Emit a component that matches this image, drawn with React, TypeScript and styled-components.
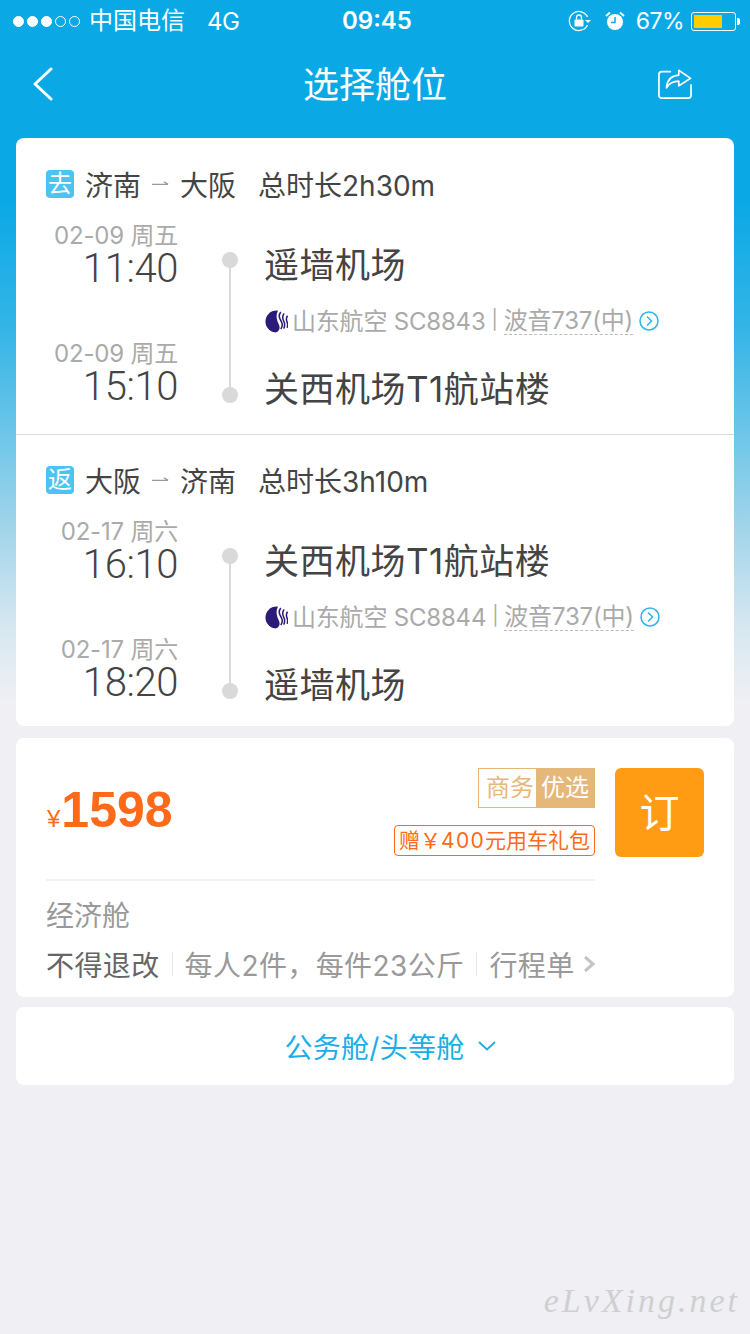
import React from 'react';
import styled, { createGlobalStyle } from 'styled-components';

const GlobalStyle = createGlobalStyle`
  html, body {
    margin: 0;
    padding: 0;
    background: #efeff4;
  }
  * {
    box-sizing: border-box;
  }
`;

const FONT = `Inter, "Noto Sans CJK SC", sans-serif`;

const Page = styled.div`
    width: 750px;
    height: 1334px;
    position: relative;
    overflow: hidden;
    font-family: ${FONT};
    color: #444;
    background: linear-gradient(
      to bottom,
      #0aa9e6 200px,
      #35b5e6 330px,
      #a5d6ea 535px,
      #d8e8f0 630px,
      #efeff4 700px
    );
  `,
  StatusBar = styled.div`
    height: 40px;
    display: flex;
    align-items: center;
    justify-content: space-between;
    padding: 2px 14px 0 13px;
    color: #fff;
    font-size: 24px;
    position: relative;
  `,
  StatusGroup = styled.div`
    display: flex;
    align-items: center;
  `,
  SignalDot = styled.span<{ $on?: boolean }>`
    width: 11px;
    height: 11px;
    margin-right: 3px;
    border-radius: 50%;
    border: 1px solid #fff;
    background: ${(props) => (props.$on ? '#fff' : 'transparent')};
  `,
  Carrier = styled.span`
    margin: -6px 0 0 6px;
  `,
  Network = styled.span`
    margin-left: 22px;
    letter-spacing: -0.5px;
  `,
  Clock = styled.span`
    position: absolute;
    left: 342px;
    top: 6px;
    font-weight: 600;
    font-size: 24px;
  `,
  AlarmIcon = styled.svg`
    margin-left: 13px;
  `,
  Percent = styled.span`
    margin: 0 7px 0 11px;
    font-size: 23px;
    letter-spacing: -0.5px;
  `,
  Battery = styled.div`
    width: 45px;
    height: 19px;
    border: 1px solid #fff;
    border-radius: 3px;
    padding: 2px;
    position: relative;
    &::after {
      content: '';
      position: absolute;
      right: -5px;
      top: 5px;
      width: 3px;
      height: 7px;
      background: #fff;
      border-radius: 0 2px 2px 0;
    }
  `,
  BatteryFill = styled.div<{ $level: number }>`
    width: ${(props) => props.$level}%;
    height: 100%;
    background: #ffcc00;
  `,
  NavBar = styled.div`
    height: 90px;
    display: grid;
    grid-template-columns: 1fr auto 1fr;
    align-items: center;
    padding: 0 58px;
    color: #fff;
    margin-bottom: 8px;
  `,
  NavTitle = styled.div`
    font-size: 36px;
    line-height: 50px;
  `,
  BackIcon = styled.svg`
    margin: -2px 0 0 -26px;
  `,
  ShareIcon = styled.svg`
    justify-self: end;
    margin-top: -2px;
  `,
  Card = styled.div<{ $gap?: number }>`
    margin: 0 16px ${(props) => props.$gap || 0}px;
    background: #fff;
    border-radius: 8px;
  `,
  Section = styled.div`
    padding: 32px 30px 25px;
    & + & {
      border-top: 1px solid #d9d9d9;
      padding-top: 31px;
      padding-bottom: 21px;
    }
  `,
  RouteHeader = styled.div`
    display: flex;
    align-items: center;
    height: 30px;
    padding-bottom: 3px;
    font-size: 28px;
    color: #444;
  `,
  DirectionTag = styled.span`
    width: 28px;
    height: 28px;
    border-radius: 4px;
    background: #4cc4f2;
    color: #fff;
    font-size: 24px;
    line-height: 28px;
    text-align: center;
    margin-right: 11px;
  `,
  RouteArrow = styled.svg`
    margin: 0 11px 0 11px;
  `,
  Duration = styled.span`
    margin-left: 22px;
  `,
  Body = styled.div`
    display: flex;
    margin-top: 24px;
    height: 185px;
  `,
  Times = styled.div`
    width: 132px;
    text-align: right;
  `,
  DateText = styled.div`
    font-size: 24px;
    line-height: 24px;
    letter-spacing: -0.2px;
    color: #aaa;
    white-space: nowrap;
  `,
  TimeText = styled.div`
    font-family: Roboto, ${FONT};
    font-weight: 300;
    font-size: 40px;
    line-height: 42px;
    letter-spacing: -0.4px;
    color: #444;
    margin-bottom: 52px;
  `,
  Timeline = styled.div`
    width: 16px;
    margin: 28px 27px 0 44px;
    height: 151px;
    display: flex;
    flex-direction: column;
    align-items: center;
  `,
  TimelineDot = styled.div`
    width: 16px;
    height: 16px;
    flex: none;
    border-radius: 50%;
    background: #d9d9d9;
  `,
  TimelineLine = styled.div`
    width: 2px;
    flex: 1;
    background: #d9d9d9;
  `,
  Stops = styled.div`
    padding-top: 21px;
    margin-left: -1px;
    flex: 1;
  `,
  StopName = styled.div`
    font-size: 35px;
    line-height: 40px;
    letter-spacing: 0.5px;
    color: #444;
  `,
  FlightInfo = styled.div`
    display: flex;
    align-items: center;
    height: 30px;
    margin: 21px 0 33px;
    padding-left: 1px;
    font-size: 24px;
    letter-spacing: -0.2px;
    color: #aaa;
    white-space: nowrap;
  `,
  LogoMark = styled.svg`
    margin-right: 4px;
    flex: none;
  `,
  FlightText = styled.span`
    margin-top: -4px;
  `,
  PlaneType = styled.span`
    border-bottom: 1px dashed #bbb;
    line-height: 27px;
    margin-top: -1px;
  `,
  Separator = styled.span`
    margin: -4px 6px 0;
    font-size: 19px;
  `,
  DetailIcon = styled.svg`
    margin-left: 6px;
    flex: none;
  `,
  FareCard = styled.div`
    display: flex;
    padding: 30px 30px 13px;
  `,
  FareMain = styled.div`
    width: 549px;
    flex: none;
  `,
  FareTop = styled.div`
    height: 113px;
    padding-bottom: 29px;
    display: flex;
    align-items: center;
    justify-content: space-between;
    border-bottom: 2px solid #f3f3f3;
  `,
  Price = styled.div`
    display: flex;
    align-items: baseline;
    font-family: 'Liberation Sans', sans-serif;
    color: #ff6a1a;
    font-weight: 700;
    font-size: 50px;
    margin-top: 2px;
  `,
  Yen = styled.span`
    font-size: 24px;
    font-weight: 400;
    margin: 0 1px 0 1px;
  `,
  Tags = styled.div`
    align-self: flex-start;
    display: flex;
    flex-direction: column;
    align-items: flex-end;
    gap: 17px;
  `,
  BrandTag = styled.div`
    display: flex;
    height: 40px;
    border: 1px solid #e5b87a;
    font-size: 24px;
    line-height: 38px;
  `,
  BrandPart = styled.span<{ $solid?: boolean }>`
    padding: 0 ${(props) => (props.$solid ? '5px' : '2px')} 0 ${(props) => (props.$solid ? '5px' : '7px')};
    background: ${(props) => (props.$solid ? '#e5b87a' : '#fff')};
    color: ${(props) => (props.$solid ? '#fff' : '#e5b87a')};
  `,
  GiftTag = styled.div`
    height: 31px;
    padding: 0 4px;
    border: 1px solid #ff6a1a;
    border-radius: 4px;
    font-size: 21px;
    line-height: 29px;
    color: #ff6a1a;
    white-space: nowrap;
  `,
  GiftAmount = styled.span`
    letter-spacing: 1.300px;
  `,
  CabinName = styled.div`
    font-size: 28px;
    line-height: 40px;
    margin-top: 15px;
    color: #999;
  `,
  Rules = styled.div`
    display: flex;
    align-items: center;
    height: 40px;
    margin-top: 8px;
    font-size: 28px;
    letter-spacing: 0.4px;
    color: #999;
    white-space: nowrap;
  `,
  RuleStrong = styled.span`
    color: #666;
  `,
  RuleDivider = styled.span`
    width: 1px;
    height: 24px;
    margin: 0 12px;
    background: #e8e8e8;
  `,
  RuleChevron = styled.svg`
    margin-left: 8px;
  `,
  BookButton = styled.div`
    width: 89px;
    height: 89px;
    margin-left: 20px;
    flex: none;
    border-radius: 6px;
    background: #ff9c14;
    color: #fff;
    font-size: 40px;
    line-height: 89px;
    text-align: center;
  `,
  MoreCabins = styled.div`
    height: 78px;
    padding-left: 30px;
    display: flex;
    align-items: center;
    justify-content: center;
    font-size: 28px;
    letter-spacing: 0.3px;
    color: #19aee8;
  `,
  MoreChevron = styled.svg`
    margin-left: 13px;
  `,
  Watermark = styled.div`
    position: absolute;
    right: 10px;
    bottom: 14px;
    font-family: 'Liberation Serif', serif;
    font-style: italic;
    font-size: 34px;
    letter-spacing: 3px;
    color: #cfcfd2;
  `;

function AirlineLogo() {
  return (
    <LogoMark width="23" height="23" viewBox="0 0 24 24">
      <circle cx="12" cy="12" r="11.5" fill="#2b1a78" />
      <path d="M14 0h10v24H11c5-3 5-6 3-10s-3-9 0-14z" fill="#fff" />
      <path
        d="M16.500 2c-2.500 3-2 6 0 9s2 6 0 9M20 3.500c-2 2.500-2 5-.5 8s1.500 5 0 8M23.500 6c-1.500 2-1.500 4-.5 6.500s1 4 0 6"
        fill="none"
        stroke="#2b1a78"
        strokeWidth="1.600"
      />
    </LogoMark>
  );
}

function DetailCircle() {
  return (
    <DetailIcon width="20" height="20" viewBox="0 0 20 20" fill="none">
      <circle cx="10" cy="10" r="9" stroke="#2fb4ea" strokeWidth="1.500" />
      <path d="M8 5.500 12.500 10 8 14.500" stroke="#2fb4ea" strokeWidth="1.500" />
    </DetailIcon>
  );
}

interface Leg {
  tag: string;
  from: string;
  to: string;
  duration: string;
  departDate: string;
  departTime: string;
  arriveDate: string;
  arriveTime: string;
  departStop: string;
  arriveStop: string;
  flight: string;
}

const legs: Leg[] = [
  {
    tag: '去',
    from: '济南',
    to: '大阪',
    duration: '总时长2h30m',
    departDate: '02-09 周五',
    departTime: '11:40',
    arriveDate: '02-09 周五',
    arriveTime: '15:10',
    departStop: '遥墙机场',
    arriveStop: '关西机场T1航站楼',
    flight: '山东航空 SC8843',
  },
  {
    tag: '返',
    from: '大阪',
    to: '济南',
    duration: '总时长3h10m',
    departDate: '02-17 周六',
    departTime: '16:10',
    arriveDate: '02-17 周六',
    arriveTime: '18:20',
    departStop: '关西机场T1航站楼',
    arriveStop: '遥墙机场',
    flight: '山东航空 SC8844',
  },
];

function LegSection({ leg }: { leg: Leg }) {
  return (
    <Section>
      <RouteHeader>
        <DirectionTag>{leg.tag}</DirectionTag>
        {leg.from}
        <RouteArrow width="17" height="9" viewBox="0 0 20 10" fill="none">
          <path d="M0 6h19M14 3l5 3" stroke="#999" strokeWidth="1.500" />
        </RouteArrow>
        {leg.to}
        <Duration>{leg.duration}</Duration>
      </RouteHeader>
      <Body>
        <Times>
          <DateText>{leg.departDate}</DateText>
          <TimeText>{leg.departTime}</TimeText>
          <DateText>{leg.arriveDate}</DateText>
          <TimeText>{leg.arriveTime}</TimeText>
        </Times>
        <Timeline>
          <TimelineDot />
          <TimelineLine />
          <TimelineDot />
        </Timeline>
        <Stops>
          <StopName>{leg.departStop}</StopName>
          <FlightInfo>
            <AirlineLogo />
            <FlightText>{leg.flight}</FlightText>
            <Separator>|</Separator>
            <PlaneType>波音737(中)</PlaneType>
            <DetailCircle />
          </FlightInfo>
          <StopName>{leg.arriveStop}</StopName>
        </Stops>
      </Body>
    </Section>
  );
}

export default function App(): JSX.Element {
  return (
    <Page>
      <GlobalStyle />
      <StatusBar>
        <StatusGroup>
          <SignalDot $on />
          <SignalDot $on />
          <SignalDot $on />
          <SignalDot />
          <SignalDot />
          <Carrier>中国电信</Carrier>
          <Network>4G</Network>
        </StatusGroup>
        <Clock>09:45</Clock>
        <StatusGroup>
          <svg width="24" height="22" viewBox="0 0 24 22" fill="none">
            <path
              d="M19.500 7A9.500 9.500 0 1 0 19.500 15"
              stroke="#fff"
              strokeWidth="1.300"
            />
            <path d="M17 10h6l-3 3z" fill="#fff" />
            <rect x="6.500" y="9.500" width="9" height="7" rx="1" fill="#fff" />
            <path
              d="M8.500 9.500V7.500a2.500 2.500 0 0 1 5 0v2"
              stroke="#fff"
              strokeWidth="1.300"
            />
          </svg>
          <AlarmIcon width="20" height="20" viewBox="0 0 20 20" fill="none">
            <circle cx="10" cy="11" r="8" fill="#fff" />
            <path d="M10 6v5.500H6" stroke="#0aa9e6" strokeWidth="1.500" />
            <path d="M1 5l4-3.500M19 5l-4-3.500" stroke="#fff" strokeWidth="2" />
          </AlarmIcon>
          <Percent>67%</Percent>
          <Battery>
            <BatteryFill $level={72} />
          </Battery>
        </StatusGroup>
      </StatusBar>
      <NavBar>
        <BackIcon width="22" height="34" viewBox="0 0 22 34" fill="none">
          <path
            d="M19 2 3 17l16 15"
            stroke="#fff"
            strokeWidth="3"
            strokeLinecap="round"
            strokeLinejoin="round"
          />
        </BackIcon>
        <NavTitle>选择舱位</NavTitle>
        <ShareIcon width="34" height="32" viewBox="0 0 36 32" fill="none">
          <path
            d="M13 3H4a3 3 0 0 0-3 3v22a3 3 0 0 0 3 3h28a3 3 0 0 0 3-3V17"
            stroke="#fff"
            strokeWidth="1.800"
            strokeLinecap="round"
          />
          <path
            d="M22 1.500 34.500 10 22 18v-5c-6 0-10 2-13 7 .5-8 5-13 13-13.500z"
            stroke="#fff"
            strokeWidth="1.800"
            strokeLinejoin="round"
          />
        </ShareIcon>
      </NavBar>

      <Card $gap={12}>
        {legs.map((leg) => (
          <LegSection key={leg.tag} leg={leg} />
        ))}
      </Card>

      <Card $gap={10}>
        <FareCard>
          <FareMain>
            <FareTop>
              <Price>
                <Yen>¥</Yen>1598
              </Price>
              <Tags>
                <BrandTag>
                  <BrandPart>商务</BrandPart>
                  <BrandPart $solid>优选</BrandPart>
                </BrandTag>
                <GiftTag>
                  赠￥<GiftAmount>400</GiftAmount>元用车礼包
                </GiftTag>
              </Tags>
            </FareTop>
            <CabinName>经济舱</CabinName>
            <Rules>
              <RuleStrong>不得退改</RuleStrong>
              <RuleDivider />
              每人2件，每件23公斤
              <RuleDivider />
              行程单
              <RuleChevron width="12" height="18" viewBox="0 0 12 18" fill="none">
                <path d="M2 2l8 7-8 7" stroke="#c4c4c4" strokeWidth="3" />
              </RuleChevron>
            </Rules>
          </FareMain>
          <BookButton>订</BookButton>
        </FareCard>
      </Card>

      <Card>
        <MoreCabins>
          公务舱/头等舱
          <MoreChevron width="18" height="10" viewBox="0 0 18 10" fill="none">
            <path d="M1 1l8 7.500L17 1" stroke="#19aee8" strokeWidth="1.800" />
          </MoreChevron>
        </MoreCabins>
      </Card>

      <Watermark>eLvXing.net</Watermark>
    </Page>
  );
}
